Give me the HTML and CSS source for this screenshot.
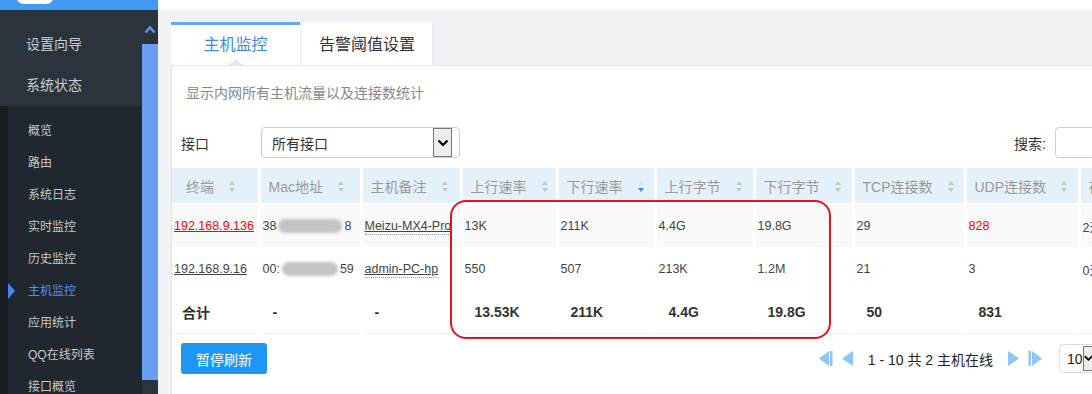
FILE: index.html
```
<!DOCTYPE html>
<html lang="zh-CN">
  <head>
    <meta charset="UTF-8" />
    <meta name="viewport" content="width=device-width, initial-scale=1.0" />
    <title>主机监控</title>
    <link rel="stylesheet" href="styles.css">
  </head>
  <body>
    <div class="app">
      <aside class="sidebar">
        <div class="brand"><span class="brand-logo"></span></div>
        <div class="side-body">
          <nav class="menu">
            <div class="menu-top">
              <div class="menu-group">设置向导</div>
              <div class="menu-group">系统状态</div>
            </div>
            <ul class="submenu">
              <li>概览</li>
              <li>路由</li>
              <li>系统日志</li>
              <li>实时监控</li>
              <li>历史监控</li>
              <li class="active">主机监控</li>
              <li>应用统计</li>
              <li>QQ在线列表</li>
              <li>接口概览</li>
            </ul>
          </nav>
          <div class="scrollbar">
            <div class="scroll-up">
              <svg width="12" height="9" viewBox="0 0 12 9"><polyline points="1.5,7.5 6,2.5 10.5,7.5" fill="none" stroke="#5b93ea" stroke-width="2.6"/></svg>
            </div>
            <div class="scroll-thumb"></div>
          </div>
        </div>
      </aside>

      <main class="main">
        <div class="topbar"></div>
        <div class="content">
          <div class="tabs">
            <div class="tab active">主机监控<span class="tab-notch"></span></div>
            <div class="tab">告警阈值设置</div>
          </div>

          <section class="panel">
            <p class="intro">显示内网所有主机流量以及连接数统计</p>

            <div class="toolbar">
              <span class="field-label">接口</span>
              <div class="select">
                <span>所有接口</span>
                <span class="select-btn">
                  <svg width="12" height="8" viewBox="0 0 12 8"><polyline points="1.5,1.5 6,6 10.5,1.5" fill="none" stroke="#000" stroke-width="2.2"/></svg>
                </span>
              </div>
              <span class="search-label">搜索:</span>
              <div class="search-input"></div>
            </div>

            <table class="hosts">
              <colgroup>
                <col style="width:87px"><col style="width:102px"><col style="width:100px">
                <col style="width:96px"><col style="width:98px"><col style="width:99px">
                <col style="width:99px"><col style="width:112px"><col style="width:114px"><col>
              </colgroup>
              <thead>
                <tr>
                  <th class="first">终端<i class="sort"></i></th>
                  <th>Mac地址<i class="sort"></i></th>
                  <th>主机备注<i class="sort"></i></th>
                  <th>上行速率<i class="sort"></i></th>
                  <th>下行速率<i class="sort sort-desc"></i></th>
                  <th>上行字节<i class="sort"></i></th>
                  <th>下行字节<i class="sort"></i></th>
                  <th>TCP连接数<i class="sort"></i></th>
                  <th>UDP连接数<i class="sort"></i></th>
                  <th>在线时长<i class="sort"></i></th>
                </tr>
              </thead>
              <tbody>
                <tr class="odd">
                  <td><a class="ip alert">192.168.9.136</a></td>
                  <td>38<span class="blur"></span>8</td>
                  <td><a class="note">Meizu-MX4-Pro</a></td>
                  <td>13K</td>
                  <td>211K</td>
                  <td>4.4G</td>
                  <td>19.8G</td>
                  <td>29</td>
                  <td class="alert">828</td>
                  <td>2天3小时</td>
                </tr>
                <tr>
                  <td><a class="ip">192.168.9.16</a></td>
                  <td>00:<span class="blur short"></span>59</td>
                  <td><a class="note">admin-PC-hp</a></td>
                  <td>550</td>
                  <td>507</td>
                  <td>213K</td>
                  <td>1.2M</td>
                  <td>21</td>
                  <td>3</td>
                  <td>0天5小时</td>
                </tr>
                <tr class="total">
                  <td>合计</td>
                  <td>-</td>
                  <td>-</td>
                  <td>13.53K</td>
                  <td>211K</td>
                  <td>4.4G</td>
                  <td>19.8G</td>
                  <td>50</td>
                  <td>831</td>
                  <td>-</td>
                </tr>
              </tbody>
            </table>

            <div class="footer">
              <button class="btn">暂停刷新</button>
              <div class="pager">
                <svg class="pg-icon" width="14" height="15" viewBox="0 0 14 15"><polygon points="10,0 10,15 0,7.5" fill="#8fc6f6"/><rect x="11" y="0" width="2.5" height="15" fill="#8fc6f6"/></svg>
                <svg class="pg-icon" width="11" height="15" viewBox="0 0 11 15"><polygon points="11,0 11,15 0,7.5" fill="#8fc6f6"/></svg>
                <span class="pg-text">1 - 10 共 2 主机在线</span>
                <svg class="pg-icon" width="11" height="15" viewBox="0 0 11 15"><polygon points="0,0 0,15 11,7.5" fill="#8fc6f6"/></svg>
                <svg class="pg-icon" width="14" height="15" viewBox="0 0 14 15"><rect x="0.5" y="0" width="2.5" height="15" fill="#8fc6f6"/><polygon points="4,0 4,15 14,7.5" fill="#8fc6f6"/></svg>
                <div class="page-size">
                  <span>10</span>
                  <span class="select-btn small">
                    <svg width="10" height="7" viewBox="0 0 10 7"><polyline points="1,1 5,5 9,1" fill="none" stroke="#000" stroke-width="2"/></svg>
                  </span>
                </div>
              </div>
            </div>

            <div class="mark"></div>
          </section>
        </div>
      </main>
    </div>
  </body>
</html>
```

FILE: styles.css
```
body {
  margin: 0;
  font-family: "Liberation Sans", "Noto Sans CJK SC", sans-serif;
  color: #333;
  overflow: hidden;
}
.app {
  display: flex;
  width: 1092px;
  height: 394px;
  overflow: hidden;
}

/* sidebar */
.sidebar {
  width: 158px;
  flex-shrink: 0;
  background: #2b333d;
  display: flex;
  flex-direction: column;
}
.brand {
  height: 10px;
  background: #409cf2;
  overflow: hidden;
  padding-left: 16px;
}
.brand-logo {
  display: block;
  width: 38px;
  height: 24px;
  margin-top: -20px;
  background: #fff;
  border-radius: 8px;
}
.side-body {
  flex: 1;
  display: flex;
  min-height: 0;
}
.menu {
  flex: 1;
  display: flex;
  flex-direction: column;
}
.menu-top {
  padding-top: 14px;
}
.menu-group {
  height: 41px;
  line-height: 41px;
  padding-left: 26px;
  font-size: 14px;
  color: #c9cdd2;
}
.submenu {
  flex: 1;
  list-style: none;
  margin: 0;
  padding: 9px 0 0;
  background: #21272e;
  border-left: 8px solid #1a1e22;
}
.submenu li {
  position: relative;
  height: 32px;
  line-height: 32px;
  padding-left: 20px;
  font-size: 12px;
  color: #c3c8cd;
}
.submenu li.active {
  color: #4d8ff0;
}
.submenu li.active::before {
  content: "";
  position: absolute;
  left: 0;
  top: 8px;
  border-left: 7px solid #3b8bef;
  border-top: 8px solid transparent;
  border-bottom: 8px solid transparent;
}
.scrollbar {
  width: 16px;
  display: flex;
  flex-direction: column;
  background: #2b333d;
}
.scroll-up {
  height: 34px;
  display: flex;
  align-items: center;
  justify-content: center;
  padding-top: 4px;
  box-sizing: border-box;
}
.scroll-thumb {
  height: 336px;
  background: #6a9ef5;
}

/* main */
.main {
  flex: 1;
  min-width: 0;
  background: #f0f2f5;
  overflow: hidden;
}
.topbar {
  height: 10px;
  background: #fff;
}
.content {
  padding: 12px 0 0 13px;
}
.tabs {
  display: flex;
  gap: 2px;
}
.tab {
  position: relative;
  width: 129px;
  height: 40px;
  line-height: 40px;
  border-top: 3px solid #fff;
  background: #fff;
  text-align: center;
  font-size: 16px;
  color: #333;
}
.tab + .tab {
  width: 130px;
  border-right: 1px solid #e3e8ef;
}
.tab.active {
  border-top-color: #62aaf0;
  color: #3d8ae6;
}
.tab-notch {
  position: absolute;
  left: 58px;
  bottom: 0;
  border-bottom: 6px solid #e4e9f0;
  border-left: 7px solid transparent;
  border-right: 7px solid transparent;
}
.panel {
  position: relative;
  width: 1000px;
  height: 340px;
  box-sizing: border-box;
  background: #fff;
  border-left: 1px solid #d9e2ee;
  border-top: 1px solid #dfe6ef;
}
.intro {
  margin: 0;
  padding: 17px 0 0 14px;
  font-size: 14px;
  line-height: 20px;
  color: #888;
}
.toolbar {
  display: flex;
  align-items: center;
  margin-top: 24px;
  padding: 0 10px 0 9px;
  height: 31px;
}
.field-label {
  width: 80px;
  font-size: 14px;
  color: #333;
}
.select {
  width: 199px;
  height: 31px;
  box-sizing: border-box;
  border: 1px solid #ccc;
  border-radius: 4px;
  display: flex;
  align-items: center;
  padding: 0 7px 0 10px;
  font-size: 14px;
  color: #333;
}
.select span:first-child {
  flex: 1;
}
.select-btn {
  width: 19px;
  height: 29px;
  box-sizing: border-box;
  border: 1px solid #777;
  background: #ececec;
  display: flex;
  align-items: center;
  justify-content: center;
}
.select-btn.small {
  width: 11px;
  height: 25px;
}
.search-label {
  margin-left: auto;
  margin-right: 9px;
  font-size: 14px;
  color: #333;
}
.search-input {
  width: 106px;
  height: 31px;
  box-sizing: border-box;
  border: 1px solid #ccc;
  border-radius: 4px;
}

/* table */
.hosts {
  margin-top: 10px;
  width: 999px;
  table-layout: fixed;
  border-collapse: collapse;
}
.hosts th,
.hosts td {
  border-right: 3px solid #fff;
  text-align: left;
  white-space: nowrap;
  overflow: hidden;
}
.hosts th {
  height: 35px;
  border-bottom: 2px solid #fff;
  background: #e5f1fa;
  padding: 0 0 0 8px;
  font-size: 14px;
  font-weight: normal;
  color: #999;
}
.hosts th.first {
  padding-left: 14px;
}
.sort {
  display: inline-block;
  vertical-align: middle;
  margin-left: 15px;
  margin-top: -3px;
  width: 7px;
  height: 11px;
  position: relative;
}
.sort::before,
.sort::after {
  content: "";
  position: absolute;
  left: 0;
  border-left: 3.5px solid transparent;
  border-right: 3.5px solid transparent;
}
.sort::before {
  top: 0;
  border-bottom: 4px solid #c6c6c6;
}
.sort::after {
  bottom: 0;
  border-top: 4px solid #c6c6c6;
}
.sort.sort-desc::before {
  border-bottom-color: #dfe4ea;
}
.sort.sort-desc::after {
  border-top-color: #3f8ee6;
}
.hosts td {
  height: 42px;
  border-bottom: 1px solid #fff;
  padding: 0 0 0 2px;
  font-size: 12.5px;
  color: #444;
}
.hosts tr.odd td {
  background: #f9f9f9;
}
.hosts td.alert,
.ip.alert {
  color: #f00;
}
.ip {
  color: #444;
  text-decoration: underline;
}
.note {
  color: #444;
  text-decoration: underline;
  border-bottom: 1px dotted #999;
  padding-bottom: 1px;
}
.blur {
  display: inline-block;
  vertical-align: middle;
  width: 64px;
  height: 14px;
  margin: 0 2px;
  border-radius: 7px;
  background: #c4c4c4;
  filter: blur(1.5px);
}
.blur.short {
  width: 56px;
}
.hosts tr.total td {
  border-bottom: 1px solid #eef0f3;
  padding-left: 12px;
  font-size: 14px;
  font-weight: bold;
  color: #333;
}
.hosts tr.total td:first-child {
  padding-left: 10px;
}

/* footer */
.footer {
  display: flex;
  align-items: center;
  margin-top: 9px;
  padding: 0 62px 0 9px;
}
.btn {
  width: 86px;
  height: 31px;
  border: none;
  border-radius: 3px;
  background: #1f96f3;
  color: #fff;
  font-family: inherit;
  font-size: 14px;
  padding: 0;
}
.pager {
  margin-left: auto;
  display: flex;
  align-items: center;
  gap: 9px;
}
.pg-text {
  margin: 0 6px;
  font-size: 14px;
  color: #222;
}
.page-size {
  margin-left: 8px;
  width: 50px;
  height: 29px;
  box-sizing: border-box;
  border: 1px solid #ddd;
  border-radius: 4px;
  display: flex;
  align-items: center;
  padding: 0 0 0 7px;
  font-size: 14px;
  color: #222;
}
.page-size span:first-child {
  width: 16px;
}

/* annotation drawn on the screenshot */
.mark {
  position: absolute;
  left: 278px;
  top: 134px;
  width: 381px;
  height: 139px;
  box-sizing: border-box;
  border: 2px solid #e5131c;
  border-radius: 16px;
}
```
